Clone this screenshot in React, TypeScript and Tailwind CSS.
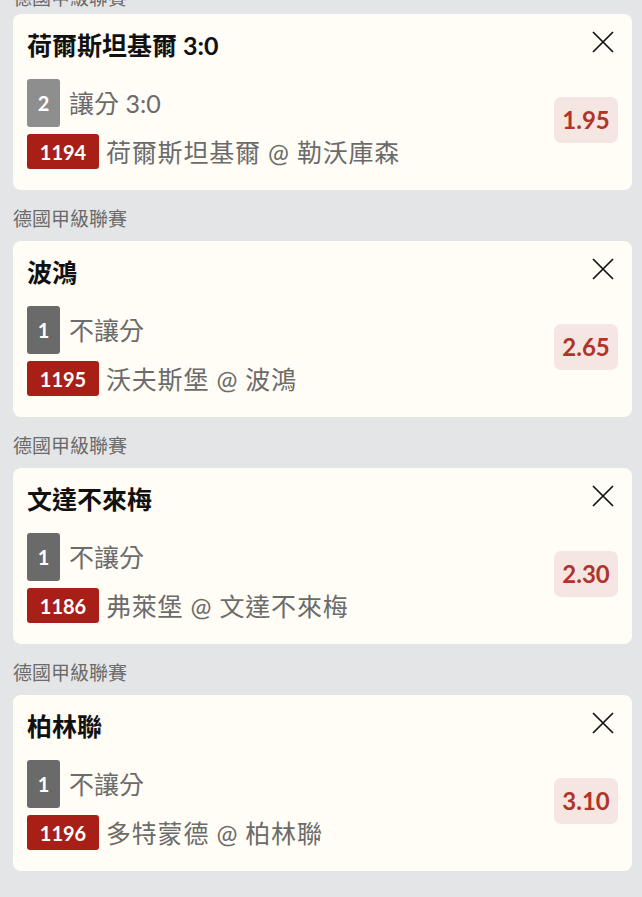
import React from "react";

type Bet = {
  league: string;
  title: string;
  sel: string;
  selType: "gray" | "dark";
  selText: string;
  code: string;
  match: string;
  odds: string;
};

const bets: Bet[] = [
  { league: "德國甲級聯賽", title: "荷爾斯坦基爾 3:0", sel: "2", selType: "gray", selText: "讓分 3:0", code: "1194", match: "荷爾斯坦基爾 @ 勒沃庫森", odds: "1.95" },
  { league: "德國甲級聯賽", title: "波鴻", sel: "1", selType: "dark", selText: "不讓分", code: "1195", match: "沃夫斯堡 @ 波鴻", odds: "2.65" },
  { league: "德國甲級聯賽", title: "文達不來梅", sel: "1", selType: "dark", selText: "不讓分", code: "1186", match: "弗萊堡 @ 文達不來梅", odds: "2.30" },
  { league: "德國甲級聯賽", title: "柏林聯", sel: "1", selType: "dark", selText: "不讓分", code: "1196", match: "多特蒙德 @ 柏林聯", odds: "3.10" },
];

function CloseIcon() {
  return (
    <svg width="22" height="22" viewBox="0 0 22 22" fill="none" stroke="#111" strokeWidth="1.7" strokeLinecap="butt">
      <path d="M1 1 L21 21 M21 1 L1 21" />
    </svg>
  );
}

function Card({ b }: { b: Bet }) {
  return (
    <div className="rounded-[8px] bg-[#fffdf6] pl-[14px] pr-[14px] pt-[17px] pb-[21px]">
      <div className="flex justify-between">
        <div className="text-[25px] leading-[28px] font-bold text-[#111]">{b.title}</div>
        <div className="mr-[4px] h-[22px] w-[22px]">
          <CloseIcon />
        </div>
      </div>
      <div className="mt-[20px] flex justify-between">
        <div className="flex flex-col">
          <div className="flex items-center">
            <div
              className={
                "flex h-[48px] w-[33px] items-center justify-center rounded-[3px] text-[20px] font-bold text-white " +
                (b.selType === "gray" ? "bg-[#8e8e8e]" : "bg-[#6a6a6a]")
              }
            >
              {b.sel}
            </div>
            <div className="ml-[9px] text-[25px] leading-[30px] text-[#6b6b6b]">{b.selText}</div>
          </div>
          <div className="mt-[7px] flex items-center">
            <div className="flex h-[35px] w-[72px] items-center justify-center rounded-[3px] bg-[#a81f18] text-[20px] font-bold text-white">
              {b.code}
            </div>
            <div className="ml-[7px] text-[25px] leading-[30px] tracking-[0.8px] text-[#6b6b6b]">{b.match}</div>
          </div>
        </div>
        <div className="mt-[18px] flex h-[46px] w-[64px] items-center justify-center rounded-[7px] bg-[#f6e6e1] text-[24px] font-bold text-[#b0342a]">
          {b.odds}
        </div>
      </div>
    </div>
  );
}

export default function App() {
  return (
    <div
      className="min-h-screen overflow-hidden bg-[#e4e5e7] pl-[13px] pr-[10px] pb-[30px]"
      style={{ fontFamily: "Lato, 'Noto Sans CJK TC', sans-serif" }}
    >
      {bets.map((b, i) => (
        <div key={i}>
          <div
            className={
              "text-[19px] leading-[24px] text-[#6b6b6b] " + (i === 0 ? "-mt-[14px] pb-[4px]" : "pt-[17px] pb-[10px]")
            }
          >
            {b.league}
          </div>
          <Card b={b} />
        </div>
      ))}
    </div>
  );
}
